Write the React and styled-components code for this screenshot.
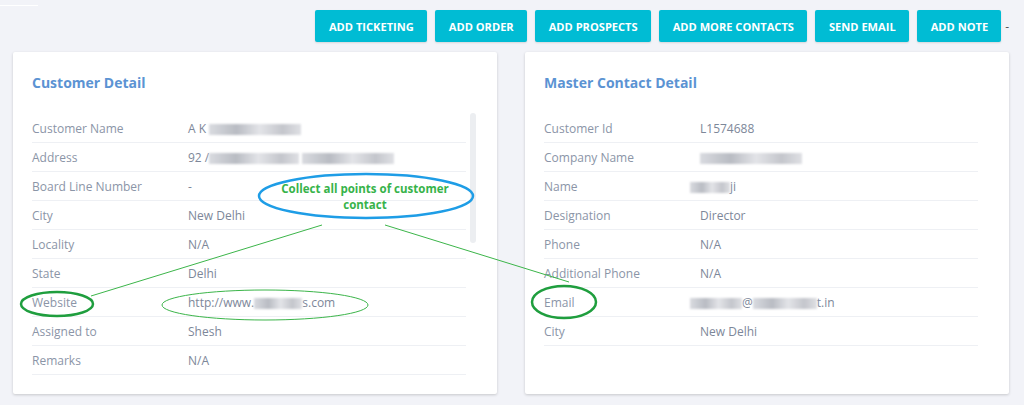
import React from 'react'
import styled, { createGlobalStyle } from 'styled-components'

const GlobalStyle = createGlobalStyle`
  body {
    margin: 0;
    background: #f2f3f8;
    font-family: "Open Sans", "Liberation Sans", sans-serif;
  }
`

const Page = styled.div`
  position: relative;
  width: 1024px;
  height: 405px;
  overflow: hidden;
  background: #f2f3f8;
`

const TopLine = styled.div`
  position: absolute;
  left: 0;
  top: 5px;
  width: 38px;
  height: 1px;
  background: #ffffff;
`

const Toolbar = styled.div`
  display: flex;
  justify-content: flex-end;
  align-items: center;
  gap: 8px;
  padding: 10px 15px 0 0;
  height: 32px;
`

const ActionButton = styled.button`
  height: 32px;
  padding: 0 13px 0 14px;
  border: none;
  border-radius: 2px;
  background: #00bcd4;
  color: #ffffff;
  font-family: "Open Sans", "Liberation Sans", sans-serif;
  font-size: 11.1px;
  font-weight: 700;
  text-transform: uppercase;
  box-shadow: 0 1px 2px rgba(0, 0, 0, 0.12);
  cursor: pointer;
`

const Dash = styled.span`
  color: #555;
  font-size: 12px;
  margin-left: -4px;
`

const Cards = styled.div`
  display: flex;
  gap: 28px;
  padding: 10px 0 0 13px;
`

const Card = styled.div`
  position: relative;
  width: 484px;
  height: 342px;
  box-sizing: border-box;
  padding: 21px 31px 17px 19px;
  background: #ffffff;
  border-radius: 2px;
  box-shadow: 0 1px 3px rgba(0, 0, 0, 0.18);
`

const Title = styled.h3`
  margin: 0 0 21px;
  height: 20px;
  line-height: 20px;
  font-size: 14px;
  font-weight: 700;
  color: #5b93d3;
`

const Row = styled.div`
  display: flex;
  align-items: center;
  height: 27px;
  padding-top: 1px;
  border-bottom: 1px solid #eef0f4;
  font-size: 12px;
`

const Label = styled.div`
  width: 156px;
  flex: none;
  color: #8b95a7;
`

const Value = styled.div`
  color: #7d8799;
  margin-left: ${p => p.$shift || 0}px;
`

const Blur = styled.span`
  display: inline-block;
  width: ${p => p.$w}px;
  height: 11px;
  vertical-align: middle;
  background: linear-gradient(90deg, #d9dbe0, #b9bcc3 30%, #e3e4e8 55%, #c4c6cc 80%, #dfe0e4);
  filter: blur(1.2px);
`

const ScrollThumb = styled.div`
  position: absolute;
  left: 457px;
  top: 61px;
  width: 6px;
  height: 130px;
  border-radius: 3px;
  background: #eceef1;
`

const Callout = styled.div`
  position: absolute;
  left: 265px;
  top: 181px;
  width: 200px;
  text-align: center;
  color: #37b34a;
  font-family: "Open Sans", "Liberation Sans", sans-serif;
  font-weight: 700;
  font-size: 11.5px;
  line-height: 16px;
  pointer-events: none;
`

const Overlay = styled.svg`
  position: absolute;
  left: 0;
  top: 0;
  pointer-events: none;
`

const customer = [
  ['Customer Name', <>A K <Blur $w={92} /></>],
  ['Address', <>92 /<Blur $w={90} /> <Blur $w={92} /></>],
  ['Board Line Number', '-'],
  ['City', 'New Delhi'],
  ['Locality', 'N/A'],
  ['State', 'Delhi'],
  ['Website', <>http://www.<Blur $w={48} />s.com</>],
  ['Assigned to', 'Shesh'],
  ['Remarks', 'N/A'],
]

const master = [
  ['Customer Id', 'L1574688'],
  ['Company Name', <Blur $w={102} />],
  ['Name', <><Blur $w={40} />ji</>, -10],
  ['Designation', 'Director'],
  ['Phone', 'N/A'],
  ['Additional Phone', 'N/A'],
  ['Email', <><Blur $w={52} />@<Blur $w={64} />t.in</>, -10],
  ['City', 'New Delhi'],
]

function DetailCard({ title, rows, scroll }) {
  return (
    <Card>
      <Title>{title}</Title>
      {rows.map(([label, value, shift]) => (
        <Row key={label}>
          <Label>{label}</Label>
          <Value $shift={shift}>{value}</Value>
        </Row>
      ))}
      {scroll && <ScrollThumb />}
    </Card>
  )
}

export default function App() {
  const buttons = ['Add Ticketing', 'Add Order', 'Add Prospects', 'Add More Contacts', 'Send Email', 'Add Note']
  return (
    <Page>
      <GlobalStyle />
      <TopLine />
      <Toolbar>
        {buttons.map(b => <ActionButton key={b}>{b}</ActionButton>)}
        <Dash>-</Dash>
      </Toolbar>
      <Cards>
        <DetailCard title="Customer Detail" rows={customer} scroll />
        <DetailCard title="Master Contact Detail" rows={master} />
      </Cards>

      <Overlay width="1024" height="405" viewBox="0 0 1024 405">
        <ellipse cx="366" cy="196" rx="107" ry="22" fill="none" stroke="#1e9de6" strokeWidth="2.5" />
        <line x1="322" y1="225" x2="91" y2="296" stroke="#3cb54a" strokeWidth="1" />
        <line x1="385" y1="225" x2="569" y2="282" stroke="#3cb54a" strokeWidth="1" />
        <ellipse cx="57" cy="304" rx="36" ry="12" fill="none" stroke="#1f9e3e" strokeWidth="2.5" />
        <ellipse cx="265" cy="305" rx="103" ry="15" fill="none" stroke="#3cb54a" strokeWidth="1" />
        <ellipse cx="564" cy="302" rx="32" ry="16" fill="none" stroke="#1f9e3e" strokeWidth="2.5" />
      </Overlay>
      <Callout>Collect all points of customer<br />contact</Callout>
    </Page>
  )
}
